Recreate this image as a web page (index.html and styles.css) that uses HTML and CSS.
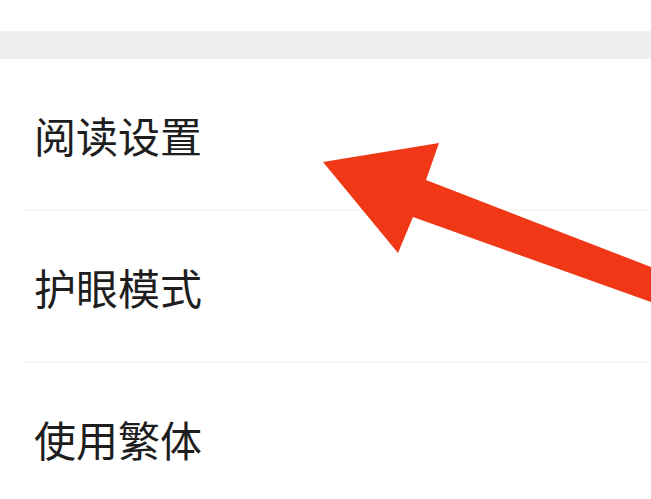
FILE: index.html
```html
<!DOCTYPE html>
<html lang="zh-CN">
<head>
<meta charset="utf-8">
<title>设置</title>
<link rel="stylesheet" href="styles.css">
</head>
<body>
<div class="page">
  <div class="top"></div>
  <div class="band"></div>
  <ul class="list">
    <li class="row">阅读设置</li>
    <li class="row">护眼模式</li>
    <li class="row">使用繁体</li>
  </ul>
  <svg class="arrow" width="651" height="499" viewBox="0 0 651 499" aria-hidden="true">
    <polygon points="323,162 439,143 426,180 651,267 651,302 413,217 398,253" fill="#f03816"/>
  </svg>
</div>
</body>
</html>
```

FILE: styles.css
```css
html, body {
  margin: 0;
  padding: 0;
  background: #ffffff;
}
.page {
  position: relative;
  width: 651px;
  height: 499px;
  overflow: hidden;
  font-family: "Noto Sans CJK SC", "Noto Sans", sans-serif;
}
.top {
  height: 31px;
  background: #ffffff;
}
.band {
  height: 28px;
  background: #efefef;
}
.list {
  list-style: none;
  margin: 0 0 0 23px;
  padding: 0;
}
.row {
  height: 152px;
  box-sizing: border-box;
  display: flex;
  align-items: center;
  padding-left: 11px;
  font-size: 42px;
  font-weight: 400;
  color: #1e1e1e;
  border-bottom: 1px solid #efefef;
  letter-spacing: 0;
}
.arrow {
  position: absolute;
  left: 0;
  top: 0;
}
```
